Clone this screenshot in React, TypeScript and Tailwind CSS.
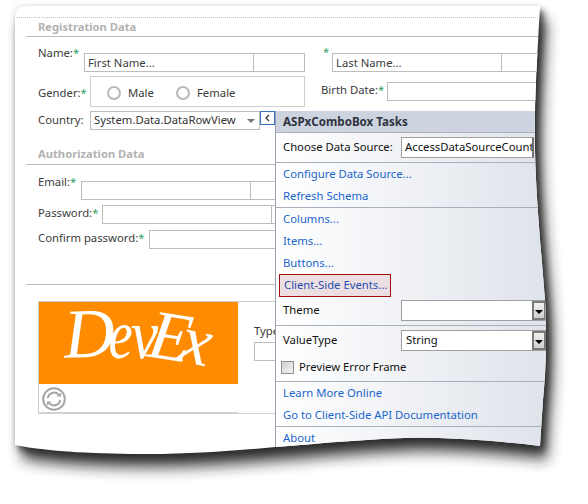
import type { ReactNode } from "react";

const PAPER =
  "M15 16 Q15 6 25 6 L540 6 C537 60 534 110 535 150 C536 200 542 260 545 300 C547 340 546 370 543 400 L540 446 C490 440 440 437 404 438 C320 441 230 454 150 454 C100 454 50 452 15 445 Z";

function Star() {
  return <span className="text-[#2f9e5f]">*</span>;
}

/* two-cell text box from the designer */
function SplitInput({ first, text, className }: { first: number; text?: string; className: string }) {
  return (
    <div className={`flex h-[19px] shrink-0 border border-[#bdbdbd] bg-white ${className}`}>
      <div className="h-full shrink-0 border-r border-[#bdbdbd] pl-[3px] leading-[17px]" style={{ width: first }}>
        {text}
      </div>
    </div>
  );
}

function Radio({ label, width }: { label: string; width: string }) {
  return (
    <div className={`flex items-center gap-[7px] ${width}`}>
      <div className="size-[14px] rounded-full border-2 border-[#b9b9b9] bg-white" />
      <span>{label}</span>
    </div>
  );
}

function PanelLink({ children }: { children: ReactNode }) {
  return <div className="h-[22px] pl-[7px] leading-[22px] text-[#1a66cc]">{children}</div>;
}

function Divider() {
  return <div className="h-px w-full bg-[#a9b0bd]" />;
}

function PanelSelect({ label, value, className }: { label: string; value?: string; className: string }) {
  return (
    <div className={`flex h-[28px] items-start pl-[7px] ${className}`}>
      <span className="w-[118px] leading-[20px] text-[#111]">{label}</span>
      <div className="flex h-[21px] w-[146px] items-stretch justify-between border border-[#a0a0a0] bg-white pl-[4px] leading-[17px] text-[#111]">
        <span>{value}</span>
        <div className="flex w-[14px] items-center justify-center border-2 border-[#7a7a7a] bg-linear-to-b from-[#f2f2f2] to-[#cfcfcf]">
          <div className="mt-[2px] h-0 w-0 border-x-[4px] border-t-[4px] border-x-transparent border-t-black" />
        </div>
      </div>
    </div>
  );
}

function DevExLogo() {
  return (
    <div className="flex h-[82px] w-[199px] shrink-0 items-start bg-[#ff8c00] pl-[25px] font-['Liberation_Serif',serif] text-[70px] italic leading-[70px] text-white">
      <span className="mt-[-3px] [transform:rotate(-2deg)]">D</span>
      <span className="ml-[-10px] mt-[-2px] [transform:scaleX(0.78)]">e</span>
      <span className="ml-[-7px] mt-[-2px] [transform:scaleX(0.88)]">v</span>
      <span className="ml-[-11px] [transform:rotate(9deg)]">E</span>
      <span className="ml-[-10px] mt-[4px] [transform:rotate(12deg)]">x</span>
    </div>
  );
}

function RefreshIcon() {
  return (
    <svg width="24" height="24" viewBox="0 0 24 24" fill="none" stroke="#a4a4a4">
      <circle cx="12" cy="12" r="10.8" strokeWidth="2" />
      <path d="M5.8 11 A6.3 6.3 0 0 1 16.6 7.6" strokeWidth="2" />
      <path d="M18.2 13 A6.3 6.3 0 0 1 7.4 16.4" strokeWidth="2" />
      <path d="M14.4 9.6 H19 V5.4 Z" fill="#a4a4a4" stroke="none" />
      <path d="M9.6 14.4 H5 V18.6 Z" fill="#a4a4a4" stroke="none" />
    </svg>
  );
}

export default function App() {
  return (
    <div className="relative h-[504px] w-[588px] overflow-hidden whitespace-nowrap bg-white font-['Noto_Sans',sans-serif] text-[11.3px] text-[#3c3c3c]">
      {/* paper shadow */}
      <svg className="absolute inset-0" width="588" height="504">
        <defs>
          <filter id="wide" x="-10%" y="-10%" width="120%" height="120%">
            <feGaussianBlur stdDeviation="7" />
          </filter>
          <filter id="tight" x="-10%" y="-10%" width="120%" height="120%">
            <feGaussianBlur stdDeviation="3" />
          </filter>
        </defs>
        <path d={PAPER} fill="#b8b8b8" filter="url(#tight)" opacity="0.5" />
        <path d={PAPER} fill="#222222" filter="url(#wide)" opacity="0.8" transform="translate(7 14)" />
        <path d={PAPER} fill="#222222" filter="url(#tight)" opacity="0.7" transform="translate(4 5)" />
      </svg>

      {/* paper */}
      <div className="absolute inset-0 bg-white pt-[17px] [clip-path:path('M15_16_Q15_6_25_6_L540_6_C537_60_534_110_535_150_C536_200_542_260_545_300_C547_340_546_370_543_400_L540_446_C490_440_440_437_404_438_C320_441_230_454_150_454_C100_454_50_452_15_445_Z')]">
        <div className="ml-[17px] w-[523px] border-t border-dotted border-[#c4c4c4]" />

        <div className="ml-[38px] h-[18px] text-[11.2px] font-bold leading-[17px] text-[#b2b2b2]">Registration Data</div>
        <div className="ml-[26px] h-px w-[512px] bg-[#bcbcbc]" />

        <div className="ml-[38px]">
          {/* name row */}
          <div className="flex h-[39px] items-start">
            <div className="mt-[8px] w-[46px] shrink-0">
              Name:<Star />
            </div>
            <SplitInput first={169} text="First Name..." className="mt-[16px] w-[221px]" />
            <div className="ml-[18px] mt-[7px] w-[9px] shrink-0">
              <Star />
            </div>
            <SplitInput first={169} text="Last Name..." className="mt-[16px] w-[220px]" />
          </div>

          {/* gender row */}
          <div className="flex h-[35px] items-start">
            <div className="mt-[9px] w-[52px] shrink-0">
              Gender:<Star />
            </div>
            <div className="flex h-[31px] w-[215px] shrink-0 items-center border border-[#cfcfcf] pl-[16px] pt-[3px]">
              <Radio label="Male" width="w-[69px]" />
              <Radio label="Female" width="" />
            </div>
            <div className="ml-[16px] mt-[6px] w-[66px] shrink-0">
              Birth Date:<Star />
            </div>
            <SplitInput first={200} className="mt-[6px] w-[200px]" />
          </div>

          {/* country row */}
          <div className="flex h-[34px] items-start">
            <div className="w-[52px] shrink-0 leading-[17px]">Country:</div>
            <div className="flex h-[19px] w-[170px] shrink-0 items-center justify-between border border-[#bdbdbd] pl-[3px] pr-[4px] text-[#333]">
              <span>System.Data.DataRowView</span>
              <div className="h-0 w-0 border-x-[4px] border-t-[4px] border-x-transparent border-t-[#777]" />
            </div>
            <div className="flex h-[14px] w-[15px] shrink-0 items-center justify-center border border-[#3f74c4] bg-white">
              <svg width="7" height="8" viewBox="0 0 7 8" fill="none" stroke="#333" strokeWidth="1.2">
                <path d="M5 1 L2 4 L5 7" />
              </svg>
            </div>
          </div>

          <div className="h-[19px] text-[11.2px] font-bold leading-[18px] text-[#b2b2b2]">Authorization Data</div>
        </div>
        <div className="ml-[26px] h-px w-[249px] bg-[#bcbcbc]" />

        <div className="ml-[38px] w-[237px] overflow-hidden">
          <div className="flex h-[40px] items-start">
            <div className="mt-[9px] w-[43px] shrink-0">
              Email:<Star />
            </div>
            <SplitInput first={169} className="mt-[16px] w-[220px]" />
          </div>
          <div className="flex h-[25px] items-start">
            <div className="w-[64px] shrink-0">
              Password:<Star />
            </div>
            <SplitInput first={169} className="w-[220px]" />
          </div>
          <div className="flex h-[54px] items-start">
            <div className="w-[111px] shrink-0">
              Confirm password:<Star />
            </div>
            <SplitInput first={169} className="w-[220px]" />
          </div>
        </div>
        <div className="ml-[26px] h-px w-[249px] bg-[#bcbcbc]" />

        {/* captcha */}
        <div className="ml-[38px] mt-[16px] flex h-[113px] w-[237px] items-stretch border-t border-l border-[#cccccc]">
          <div className="flex w-[199px] shrink-0 flex-col border-b-2 border-[#d2d2d2]">
            <DevExLogo />
            <div className="pl-[3px] pt-[3px]">
              <RefreshIcon />
            </div>
          </div>
          <div className="flex min-w-0 flex-1 flex-col overflow-hidden border-b border-[#d2d2d2] pl-[16px] pt-[21px]">
            <span className="leading-[16px]">Type</span>
            <div className="mt-[3px] h-[19px] w-[60px] shrink-0 border border-[#bdbdbd]" />
          </div>
        </div>

        {/* ASPxComboBox tasks panel */}
        <div className="absolute left-[275px] top-[111px] h-[360px] w-[290px] border-l border-[#9aa1b0] bg-linear-to-r from-white to-[#dde1e9]">
          <div className="flex h-[21px] items-center bg-[#cdd3df] pl-[7px] text-[11.6px] font-bold text-[#2e3340]">ASPxComboBox Tasks</div>
          <Divider />
          <div className="flex h-[29px] items-center pl-[7px] text-[#111]">
            <span className="w-[118px] shrink-0">Choose Data Source:</span>
            <div className="h-[21px] w-[133px] shrink-0 overflow-hidden border border-r-2 border-[#a0a0a0] border-r-[#707070] bg-white pl-[3px] leading-[17px]">
              AccessDataSourceCountry
            </div>
          </div>
          <Divider />
          <PanelLink>Configure Data Source...</PanelLink>
          <PanelLink>Refresh Schema</PanelLink>
          <Divider />
          <PanelLink>Columns...</PanelLink>
          <PanelLink>Items...</PanelLink>
          <PanelLink>Buttons...</PanelLink>
          <div className="ml-[3px] flex h-[23px] w-[112px] items-center border border-[#a01010] bg-[#ecdfe1] pl-[4px] text-[#2450b4]">
            Client-Side Events...
          </div>
          <PanelSelect label="Theme" className="pt-[3px]" />
          <Divider />
          <PanelSelect label="ValueType" value="String" className="pt-[4px]" />
          <div className="flex h-[27px] items-center pl-[5px] text-[#111]">
            <div className="size-[13px] border border-[#8e8f8f] bg-linear-to-br from-[#d0d0d0] to-[#f4f4f4]" />
            <span className="ml-[5px]">Preview Error Frame</span>
          </div>
          <Divider />
          <PanelLink>Learn More Online</PanelLink>
          <PanelLink>Go to Client-Side API Documentation</PanelLink>
          <Divider />
          <PanelLink>About</PanelLink>
        </div>
      </div>
    </div>
  );
}
